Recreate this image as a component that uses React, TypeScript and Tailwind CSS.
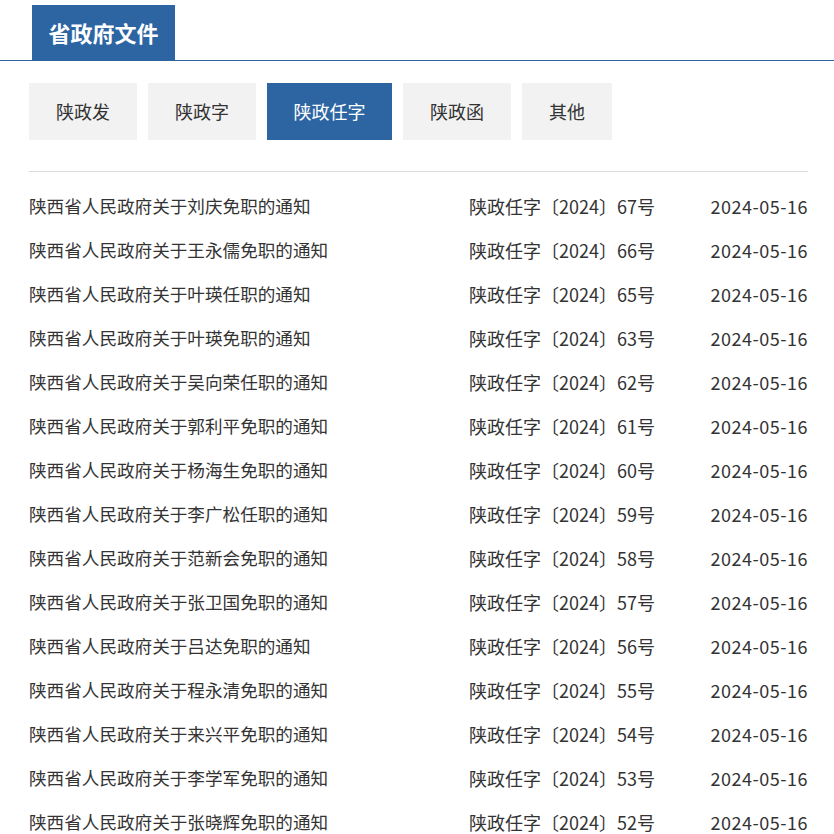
import React from 'react'

const tabs = ['陕政发', '陕政字', '陕政任字', '陕政函', '其他']

const rows: [string, string][] = [
  ['刘庆免职', '67'],
  ['王永儒免职', '66'],
  ['叶瑛任职', '65'],
  ['叶瑛免职', '63'],
  ['吴向荣任职', '62'],
  ['郭利平免职', '61'],
  ['杨海生免职', '60'],
  ['李广松任职', '59'],
  ['范新会免职', '58'],
  ['张卫国免职', '57'],
  ['吕达免职', '56'],
  ['程永清免职', '55'],
  ['来兴平免职', '54'],
  ['李学军免职', '53'],
  ['张晓辉免职', '52'],
]

export default function App() {
  return (
    <div
      className="w-[834px] h-[834px] overflow-hidden bg-white"
      style={{ fontFamily: '"Microsoft YaHei", "Noto Sans CJK SC", "Noto Sans", sans-serif' }}
    >
      {/* 标题 */}
      <div className="pt-[5px] border-b border-[#2d65a3]">
        <div className="ml-[32px] w-[143px] h-[55px] bg-[#2d65a3] flex items-center justify-center text-white text-[22px] font-bold">
          省政府文件
        </div>
      </div>

      <div className="px-[29px] w-[837px]">
        {/* 分类 */}
        <div className="flex gap-[11px] mt-[22px]">
          {tabs.map((t, i) => (
            <div
              key={t}
              className={
                i === 2
                  ? 'h-[57px] w-[125px] bg-[#2d65a3] text-white text-[18px] flex items-center justify-center'
                  : t === '其他'
                    ? 'h-[57px] w-[90px] bg-[#f2f2f2] text-[#333] text-[18px] flex items-center justify-center'
                    : 'h-[57px] w-[108px] bg-[#f2f2f2] text-[#333] text-[18px] flex items-center justify-center'
              }
            >
              {t}
            </div>
          ))}
        </div>

        <div className="mt-[31px] w-[779px] border-t border-[#dcdcdc]" />

        {/* 列表 */}
        <ul className="pt-[12px] w-[779px]">
          {rows.map(([name, no]) => (
            <li key={no} className="h-[44px] flex items-center text-[18px] text-[#333]">
              <span className="w-[440px] whitespace-nowrap text-[17.6px]">陕西省人民政府关于{name}的通知</span>
              <span className="flex-1 whitespace-nowrap">陕政任字〔2024〕{no}号</span>
              <span className="whitespace-nowrap tracking-[0.5px]">2024-05-16</span>
            </li>
          ))}
        </ul>
      </div>
    </div>
  )
}
